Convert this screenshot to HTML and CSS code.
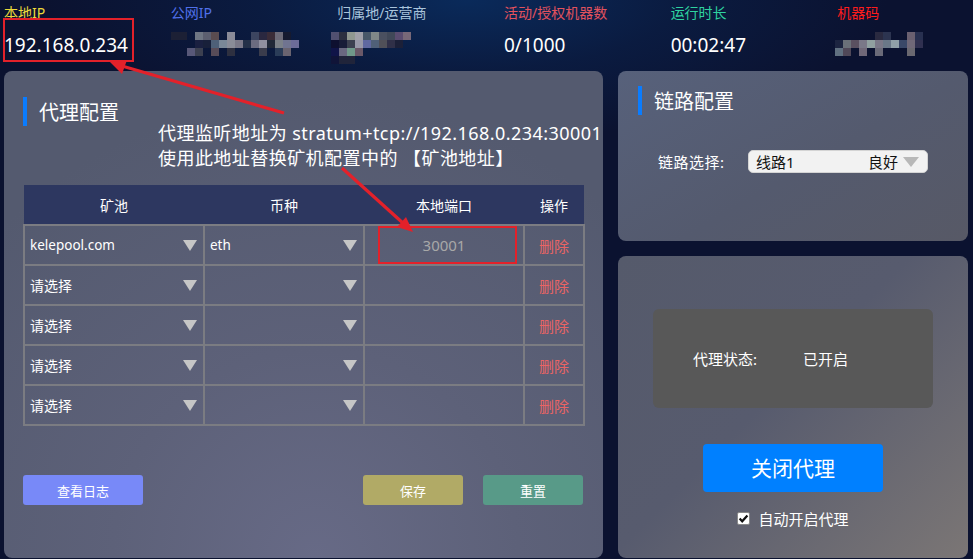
FILE: index.html
```html
<!DOCTYPE html>
<html lang="zh-CN">
<head>
<meta charset="utf-8">
<title>代理配置</title>
<link rel="stylesheet" href="styles.css">
</head>
<body>
<div class="page">
  <header class="topbar">
    <div class="stat">
      <div class="label c-yellow">本地IP</div>
      <div class="value">192.168.0.234</div>
    </div>
    <div class="stat">
      <div class="label c-blue">公网IP</div>
      <div class="value"><span class="mosaic m-ip"></span></div>
    </div>
    <div class="stat">
      <div class="label c-cyan">归属地/运营商</div>
      <div class="value"><span class="mosaic m-isp"></span></div>
    </div>
    <div class="stat">
      <div class="label c-pink">活动/授权机器数</div>
      <div class="value">0/1000</div>
    </div>
    <div class="stat">
      <div class="label c-green">运行时长</div>
      <div class="value">00:02:47</div>
    </div>
    <div class="stat">
      <div class="label c-red">机器码</div>
      <div class="value"><span class="mosaic m-code"></span></div>
    </div>
  </header>

  <main class="main">
    <section class="panel panel-proxy">
      <h2 class="title">代理配置</h2>
      <table class="pools">
        <colgroup>
          <col class="w-pool"><col class="w-coin"><col class="w-port"><col class="w-op">
        </colgroup>
        <thead>
          <tr><th>矿池</th><th>币种</th><th>本地端口</th><th>操作</th></tr>
        </thead>
        <tbody>
          <tr>
            <td><div class="sel"><span class="latin">kelepool.com</span><i class="tri"></i></div></td>
            <td><div class="sel"><span class="latin">eth</span><i class="tri"></i></div></td>
            <td class="port">30001</td>
            <td class="del">删除</td>
          </tr>
          <tr>
            <td><div class="sel"><span>请选择</span><i class="tri"></i></div></td>
            <td><div class="sel"><span></span><i class="tri"></i></div></td>
            <td class="port"></td>
            <td class="del">删除</td>
          </tr>
          <tr>
            <td><div class="sel"><span>请选择</span><i class="tri"></i></div></td>
            <td><div class="sel"><span></span><i class="tri"></i></div></td>
            <td class="port"></td>
            <td class="del">删除</td>
          </tr>
          <tr>
            <td><div class="sel"><span>请选择</span><i class="tri"></i></div></td>
            <td><div class="sel"><span></span><i class="tri"></i></div></td>
            <td class="port"></td>
            <td class="del">删除</td>
          </tr>
          <tr>
            <td><div class="sel"><span>请选择</span><i class="tri"></i></div></td>
            <td><div class="sel"><span></span><i class="tri"></i></div></td>
            <td class="port"></td>
            <td class="del">删除</td>
          </tr>
        </tbody>
      </table>
      <div class="actions">
        <button class="btn btn-log">查看日志</button>
        <span class="spacer"></span>
        <button class="btn btn-save">保存</button>
        <button class="btn btn-reset">重置</button>
      </div>
    </section>

    <div class="side">
      <section class="panel panel-link">
        <h2 class="title">链路配置</h2>
        <div class="link-row">
          <span class="link-label">链路选择:</span>
          <div class="link-select">
            <span>线路1</span>
            <span class="quality">良好</span>
            <i class="tri tri-sm"></i>
          </div>
        </div>
      </section>
      <section class="panel panel-status">
        <div class="status-box">
          <span class="status-label">代理状态:</span>
          <span>已开启</span>
        </div>
        <button class="btn-close">关闭代理</button>
        <label class="auto">
          <span class="check"><svg viewBox="0 0 13 13" width="13" height="13"><path d="M2.6 6.6 L5.2 9.3 L10.4 3.4" fill="none" stroke="#111" stroke-width="2.2"/></svg></span>
          <span>自动开启代理</span>
        </label>
      </section>
    </div>
  </main>

  <div class="note">代理监听地址为 stratum+tcp://192.168.0.234:30001<br>使用此地址替换矿机配置中的 【矿池地址】</div>

  <svg class="marks" width="973" height="559" viewBox="0 0 973 559">
    <rect x="4" y="19" width="129" height="42" fill="none" stroke="#e3212a" stroke-width="2"/>
    <rect x="379" y="227" width="137" height="36" fill="none" stroke="#e3212a" stroke-width="2"/>
    <line x1="284" y1="113" x2="122" y2="66" stroke="#e3212a" stroke-width="3.2"/>
    <polygon points="110,62 127,60 122,74" fill="#e3212a"/>
    <line x1="342" y1="168" x2="404" y2="224" stroke="#e3212a" stroke-width="3.2"/>
    <polygon points="413,232 397,227 406,217" fill="#e3212a"/>
  </svg>
</div>
</body>
</html>
```

FILE: styles.css
```css
* { box-sizing: border-box; }

html, body {
  margin: 0;
  padding: 0;
}

body {
  font-family: "Noto Sans", "Noto Sans CJK SC", sans-serif;
  color: #fff;
  background: #0b1230;
}

.page {
  position: relative;
  width: 973px;
  height: 559px;
  overflow: hidden;
  background:
    radial-gradient(ellipse 420px 140px at 48% 0%, #0a2a5a 0%, rgba(10, 36, 80, 0.5) 50%, rgba(11, 18, 48, 0) 100%),
    #0b1230;
}

/* ---------- top bar ---------- */
.topbar {
  display: flex;
  height: 71px;
  padding-left: 4px;
}

.stat {
  width: 166.67px;
  flex: none;
}

.label {
  font-size: 14px;
  line-height: 20px;
  padding-top: 3px;
  white-space: nowrap;
}

.value {
  margin-top: 9px;
  height: 26px;
  font-size: 19px;
  line-height: 26px;
  white-space: nowrap;
}

.c-yellow { color: #ecd93b; }
.c-blue { color: #5070ea; }
.c-cyan { color: #a9c4dc; }
.c-pink { color: #e2525e; }
.c-green { color: #2fd3a0; }
.c-red { color: #ff1c1c; }

.mosaic {
  display: block;
  width: 8px;
  height: 8px;
  margin-top: 1px;
}

.m-ip {
  margin-left: 0;
  background: #1c2035;
  box-shadow:
    8px 0 0 #1c2035, 24px 0 0 #6f7683, 32px 0 0 #5c5f70, 40px 0 0 #5a4c50,
    56px 0 0 #8a8b98, 80px 0 0 #3c4560, 88px 0 0 #2a2840, 96px 0 0 #3a2c38,
    104px 0 0 #6c6a78, 112px 0 0 #151a30,
    24px 8px 0 #1a2040, 32px 8px 0 #18203a, 40px 8px 0 #4e6078, 48px 8px 0 #7a8898,
    56px 8px 0 #8a8c98, 64px 8px 0 #7a7888, 72px 8px 0 #243048, 80px 8px 0 #6c6c80,
    88px 8px 0 #9090a0, 96px 8px 0 #202838, 104px 8px 0 #7a8088, 112px 8px 0 #707490,
    120px 8px 0 #6c6c98,
    16px 16px 0 #585878, 24px 16px 0 #3c4050, 40px 16px 0 #584c58, 56px 16px 0 #2e3040,
    88px 16px 0 #3a3c4c, 104px 16px 0 #2a3c58, 112px 16px 0 #6a6470;
}

.m-isp {
  margin-left: -6px;
  background: #505070;
  box-shadow:
    8px 0 0 #2c3040, 16px 0 0 #909890, 24px 0 0 #a0a0a8, 32px 0 0 #485868,
    40px 0 0 #808888, 48px 0 0 #4a5060, 56px 0 0 #404858, 64px 0 0 #5a4c70,
    72px 0 0 #786878,
    0 8px 0 #0e1030, 8px 8px 0 #181c38, 16px 8px 0 #3c4050, 24px 8px 0 #9898a8,
    32px 8px 0 #6068a0, 40px 8px 0 #506078, 48px 8px 0 #505058, 56px 8px 0 #303048,
    64px 8px 0 #1c2038,
    0 16px 0 #101448, 8px 16px 0 #6a6880, 16px 16px 0 #70988a, 24px 16px 0 #6a5868,
    0 24px 0 #101438, 8px 24px 0 #20243a, 16px 24px 0 #20243a;
}

.m-code {
  margin-left: -2px;
  background: transparent;
  box-shadow:
    40px 0 0 #2a2a40, 48px 0 0 #2c3450, 72px 0 0 #6a6070, 80px 0 0 #283050,
    0 8px 0 #1c2440, 8px 8px 0 #6a7078, 16px 8px 0 #5a5060, 24px 8px 0 #7a7888,
    32px 8px 0 #90a0a0, 40px 8px 0 #7a7888, 48px 8px 0 #6a7888, 56px 8px 0 #90a0a8,
    64px 8px 0 #3a4868, 72px 8px 0 #706878, 80px 8px 0 #303050,
    0 16px 0 #607080, 8px 16px 0 #504858, 24px 16px 0 #706878, 40px 16px 0 #6a6a78,
    72px 16px 0 #6a6870;
}

/* ---------- main ---------- */
.main {
  display: flex;
  gap: 15px;
  padding: 0 5px 0 4px;
  height: 487px;
}

.panel {
  border-radius: 8px;
}

.title {
  margin: 0;
  height: 29px;
  line-height: 29px;
  border-left: 4px solid #0a7cff;
  padding-left: 12px;
  font-size: 20px;
  font-weight: normal;
  font-family: "Noto Sans CJK SC", sans-serif;
}

.panel-proxy {
  width: 599px;
  flex: none;
  padding: 26px 20px 0 19px;
  background: radial-gradient(ellipse 75% 95% at 52% 100%, #676a86 0%, #5d6179 45%, #545a6f 100%);
}

.pools {
  margin-top: 59px;
  width: 560px;
  table-layout: fixed;
  border-collapse: collapse;
  font-size: 14px;
}

.w-pool { width: 180px; }
.w-coin { width: 160px; }
.w-port { width: 160px; }
.w-op { width: 60px; }

.pools th {
  height: 40px;
  background: #2d3760;
  font-weight: normal;
  font-size: 14px;
  padding: 0;
  border: none;
}

.pools td {
  height: 40px;
  padding: 0;
  border: 2px solid #7b7c82;
}

.sel {
  display: flex;
  align-items: center;
  justify-content: space-between;
  padding: 0 6px 0 5px;
  height: 36px;
  white-space: nowrap;
}

.latin {
  font-size: 13.5px;
}

.tri {
  display: block;
  width: 0;
  height: 0;
  border-left: 7px solid transparent;
  border-right: 7px solid transparent;
  border-top: 11px solid #c6c6c6;
}

.port {
  text-align: center;
  color: #a8a8a8;
  font-size: 15px;
}

.del {
  text-align: center;
  color: #ea6464;
  font-size: 15px;
}

.actions {
  display: flex;
  align-items: center;
  gap: 20px;
  margin-top: 49px;
}

.spacer { flex: 1; }

.btn {
  height: 30px;
  border: none;
  border-radius: 3px;
  color: #fff;
  font-family: "Noto Sans CJK SC", sans-serif;
  font-size: 13px;
  padding: 0;
}

.btn-log { width: 120px; background: #7889f8; }
.btn-save { width: 100px; background: #b1aa66; }
.btn-reset { width: 100px; background: #589a88; }

/* ---------- side ---------- */
.side {
  width: 350px;
  flex: none;
  display: flex;
  flex-direction: column;
  gap: 15px;
}

.panel-link {
  height: 170px;
  padding: 15px 20px 0 20px;
  background: linear-gradient(150deg, #57617b 0%, #545a6e 55%, #575966 100%);
}

.link-row {
  display: flex;
  align-items: center;
  margin-top: 35px;
  padding-left: 20px;
}

.link-label {
  width: 90px;
  font-size: 15px;
  letter-spacing: 0.5px;
}

.link-select {
  display: flex;
  align-items: center;
  width: 180px;
  height: 23px;
  background: #f2f2f2;
  border: 1px solid #d4d4d4;
  border-radius: 5px;
  padding: 0 8px 0 7px;
  color: #111;
  font-size: 15px;
}

.quality {
  margin-left: auto;
  margin-right: 5px;
}

.tri-sm {
  border-left-width: 8px;
  border-right-width: 8px;
  border-top: 10px solid #b8b8b8;
}

.panel-status {
  flex: 1;
  display: flex;
  flex-direction: column;
  align-items: center;
  padding-top: 53px;
  background: linear-gradient(135deg, #555a6b 0%, #575b6e 45%, #7b7675 100%);
}

.status-box {
  width: 280px;
  height: 99px;
  background: #585858;
  border-radius: 6px;
  display: flex;
  align-items: center;
  padding-left: 40px;
  font-size: 15px;
}

.status-label {
  width: 110px;
}

.btn-close {
  margin-top: 36px;
  width: 180px;
  height: 48px;
  border: none;
  border-radius: 4px;
  background: #0080ff;
  color: #fff;
  font-family: "Noto Sans CJK SC", sans-serif;
  font-size: 21px;
  padding: 0 0 3px;
}

.auto {
  display: flex;
  align-items: center;
  gap: 8px;
  margin-top: 16px;
  font-size: 15px;
}

.check {
  display: block;
  width: 13px;
  height: 13px;
  background: #fff;
  border: 1px solid #8a8a8a;
  border-radius: 2px;
  line-height: 0;
}

.check svg {
  margin: -1px 0 0 -1px;
}

/* ---------- annotations ---------- */
.note {
  position: absolute;
  left: 158px;
  top: 121px;
  font-size: 18px;
  line-height: 25px;
  letter-spacing: 0.45px;
  white-space: nowrap;
}

.marks {
  position: absolute;
  left: 0;
  top: 0;
  pointer-events: none;
}
```
